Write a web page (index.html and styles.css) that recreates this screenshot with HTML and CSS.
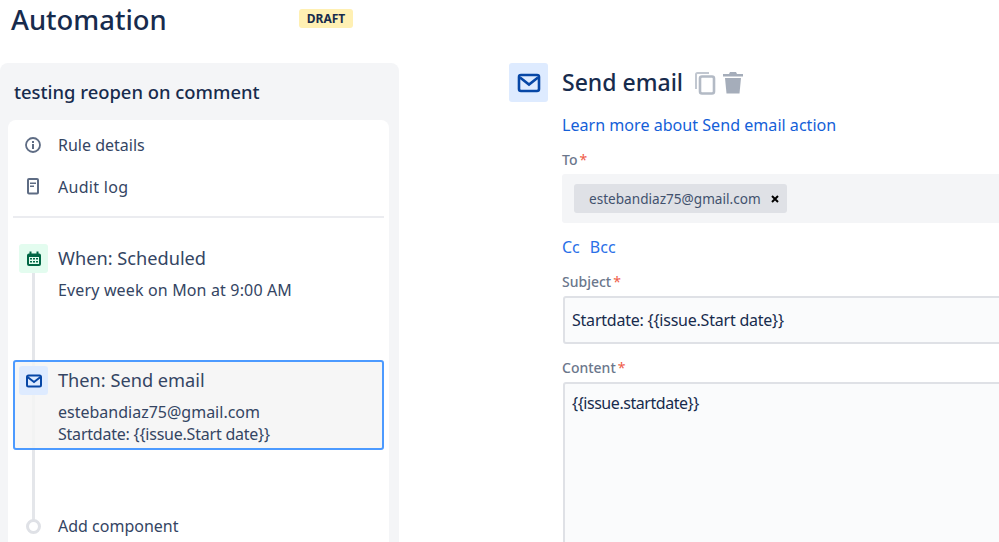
FILE: index.html
```html
<!DOCTYPE html>
<html lang="en">
<head>
    <meta charset="UTF-8">
    <meta name="viewport" content="width=device-width, initial-scale=1.0">
    <title>Automation</title>
    <link rel="stylesheet" href="styles.css">
</head>
<body>
    <div class="page">
        <div class="header">
            <h1 class="page-title">Automation</h1>
            <span class="badge">DRAFT</span>
        </div>
        <div class="main">
            <div class="panel">
                <div class="rule-name">testing reopen on comment</div>
                <div class="card">
                    <div class="menu-item">
                        <svg class="menu-icon" width="18" height="18" viewBox="0 0 18 18">
                            <circle cx="9" cy="9" r="7" fill="none" stroke="#5e6c84" stroke-width="1.800"/>
                            <rect x="8" y="8" width="2" height="5" fill="#5e6c84"/>
                            <rect x="8" y="5" width="2" height="2" fill="#5e6c84"/>
                        </svg>
                        <span>Rule details</span>
                    </div>
                    <div class="menu-item">
                        <svg class="menu-icon" width="18" height="18" viewBox="0 0 18 18">
                            <rect x="4" y="1" width="10" height="14.500" rx="1" fill="none" stroke="#5e6c84" stroke-width="2"/>
                            <rect x="6" y="4.500" width="6" height="1.500" fill="#5e6c84"/>
                            <rect x="6" y="7.500" width="4" height="1.500" fill="#5e6c84"/>
                        </svg>
                        <span class="wide">Audit log</span>
                    </div>
                    <div class="divider"></div>
                    <div class="timeline">
                        <div class="timeline-line"></div>
                        <div class="step step-when">
                            <div class="step-icon green">
                                <svg width="16" height="16" viewBox="0 0 16 16">
                                    <rect x="1" y="2.500" width="14" height="12.500" rx="2" fill="#006644"/>
                                    <rect x="3.500" y="0.500" width="2" height="3.500" fill="#006644"/>
                                    <rect x="10.500" y="0.500" width="2" height="3.500" fill="#006644"/>
                                    <rect x="3" y="6" width="10" height="7" fill="#e3fcef"/>
                                    <path d="M4 7h2v1.500H4zM7 7h2v1.500H7zM10 7h2v1.500h-2zM4 10h2v1.500H4zM7 10h2v1.500H7zM10 10h2v1.500h-2z" fill="#006644"/>
                                </svg>
                            </div>
                            <div class="step-body">
                                <div class="step-title">When: Scheduled</div>
                                <div class="step-desc when-desc">Every week on Mon at 9:00 AM</div>
                            </div>
                        </div>
                        <div class="step step-then">
                            <div class="step-icon blue">
                                <svg width="16" height="14" viewBox="0 0 16 14">
                                    <rect x="1" y="1.500" width="14" height="11" rx="1.500" fill="none" stroke="#0747a6" stroke-width="2"/>
                                    <path d="M1.500 3l6.500 5 6.500-5" fill="none" stroke="#0747a6" stroke-width="2"/>
                                </svg>
                            </div>
                            <div class="step-body">
                                <div class="step-title">Then: Send email</div>
                                <div class="step-desc then-desc">estebandiaz75@gmail.com<br><span class="tight">Startdate: {{issue.Start date}}</span></div>
                            </div>
                        </div>
                        <div class="step step-add">
                            <div class="add-dot"></div>
                            <span>Add component</span>
                        </div>
                    </div>
                </div>
            </div>
            <div class="form">
                <div class="form-head">
                    <div class="head-icon">
                        <svg width="24" height="20" viewBox="0 0 24 20">
                            <rect x="2" y="2" width="20" height="16" rx="2" fill="none" stroke="#0747a6" stroke-width="2.600"/>
                            <path d="M3 4.500l9 7 9-7" fill="none" stroke="#0747a6" stroke-width="2.600"/>
                        </svg>
                    </div>
                    <h2 class="form-title">Send email</h2>
                    <svg class="head-action" width="22" height="24" viewBox="0 0 22 24">
                        <path d="M2 18V3.500C2 2.500 2.500 2 3.500 2H15" fill="none" stroke="#c1c7d0" stroke-width="2"/>
                        <rect x="6" y="5.500" width="14" height="17" rx="2" fill="none" stroke="#b3bac5" stroke-width="2.600"/>
                    </svg>
                    <svg class="head-action" width="22" height="24" viewBox="0 0 22 24">
                        <path d="M8 1h6l1 2h6v2.500H1V3h6z" fill="#a5adba"/>
                        <path d="M3 7h16l-1.500 15.500h-13z" fill="#a5adba"/>
                    </svg>
                </div>
                <div class="form-body">
                    <a class="learn-link" href="#">Learn more about Send email action</a>
                    <label class="field-label to-label">To<span class="req">*</span></label>
                    <div class="to-box">
                        <div class="chip">
                            <span>estebandiaz75@gmail.com</span>
                            <svg width="8" height="8" viewBox="0 0 8 8">
                                <path d="M1 1l6 6M7 1l-6 6" stroke="#000" stroke-width="2"/>
                            </svg>
                        </div>
                    </div>
                    <div class="cc-row">
                        <a href="#">Cc</a>
                        <a href="#">Bcc</a>
                    </div>
                    <label class="field-label subject-label">Subject<span class="req">*</span></label>
                    <div class="text-input"><span class="tight">Startdate: {{issue.Start date}}</span></div>
                    <label class="field-label content-label">Content<span class="req">*</span></label>
                    <div class="text-area"><span class="tighter">{{issue.startdate}}</span></div>
                </div>
            </div>
        </div>
    </div>
</body>
</html>
```

FILE: styles.css
```css
* {
    margin: 0px;
    padding: 0px;
    box-sizing: border-box;
}
html, body {
    width: 999px;
    height: 542px;
    overflow: hidden;
}
body {
    background-color: white;
    font-family: "Noto Sans", "Open Sans", sans-serif;
    color: #172b4d;
}
.page {
    height: 542px;
    overflow: hidden;
}
.header {
    display: flex;
    align-items: flex-start;
    height: 63px;
    padding-left: 11px;
}
.page-title {
    font-size: 27.400px;
    font-weight: 500;
    line-height: 40px;
    width: 288px;
    color: #172b4d;
}
.badge {
    margin-top: 9px;
    width: 54px;
    height: 19px;
    border-radius: 3px;
    background-color: #fff0b3;
    font-size: 12px;
    font-weight: 700;
    line-height: 19px;
    text-align: center;
}
.main {
    display: flex;
    align-items: flex-start;
}
.panel {
    width: 399px;
    height: 479px;
    flex-shrink: 0;
    background-color: #f4f5f7;
    border-radius: 8px 8px 0 0;
    padding: 0 10px 0 8px;
}
.rule-name {
    height: 57px;
    padding: 16px 0 0 6px;
    font-size: 18.400px;
    font-weight: 500;
    line-height: 25px;
}
.card {
    background-color: white;
    border-radius: 8px 8px 0 0;
    height: 422px;
    padding: 4px 5px 0 5px;
}
.menu-item {
    display: flex;
    align-items: center;
    height: 42px;
    font-size: 16px;
    color: #344563;
}
.menu-icon {
    margin: 0 16px 0 11px;
    flex-shrink: 0;
}
.wide {
    letter-spacing: 0.3px;
}
.divider {
    height: 2px;
    background-color: #ebecf0;
    margin-top: 8px;
}
.timeline {
    position: relative;
    padding-top: 26px;
}
.timeline-line {
    position: absolute;
    left: 19px;
    top: 40px;
    width: 3px;
    height: 270px;
    background-color: #e4e6ea;
}
.step {
    display: flex;
    position: relative;
}
.step-icon {
    width: 29px;
    height: 29px;
    border-radius: 3px;
    display: flex;
    align-items: center;
    justify-content: center;
    flex-shrink: 0;
    margin-right: 10px;
}
.green {
    background-color: #e3fcef;
}
.blue {
    background-color: #deebff;
}
.step-when {
    height: 116px;
    padding-left: 6px;
}
.step-then {
    height: 90px;
    padding: 4px 0 0 4px;
    border: 2px solid #4c9aff;
    border-radius: 3px;
    background-color: rgba(244, 244, 244, 0.85);
}
.step-title {
    font-size: 18.200px;
    line-height: 28px;
    color: #344563;
}
.when-desc {
    margin-top: 7px;
    letter-spacing: 0.15px;
}
.then-desc {
    margin-top: 7px;
}
.step-desc {
    font-size: 16px;
    line-height: 22px;
    color: #344563;
}
.tight {
    letter-spacing: -0.22px;
}
.tighter {
    letter-spacing: -0.45px;
}
.step-add {
    align-items: center;
    margin-top: 65px;
    padding-left: 13px;
    font-size: 16px;
    color: #344563;
}
.add-dot {
    width: 15px;
    height: 15px;
    border-radius: 50%;
    border: 3px solid #dfe1e6;
    background-color: white;
    margin-right: 17px;
}
.form {
    margin-left: 110px;
    width: 560px;
    flex-shrink: 0;
}
.form-head {
    display: flex;
    align-items: center;
    height: 39px;
}
.head-icon {
    width: 39px;
    height: 39px;
    border-radius: 3px;
    background-color: #deebff;
    display: flex;
    align-items: center;
    justify-content: center;
    margin-right: 14px;
}
.form-title {
    font-size: 23px;
    font-weight: 500;
    line-height: 39px;
    margin-right: 11px;
}
.head-action {
    margin-right: 6px;
}
.form-body {
    padding-left: 53px;
    display: flex;
    flex-direction: column;
    align-items: flex-start;
}
.learn-link {
    margin-top: 11px;
    font-size: 16.100px;
    line-height: 24px;
    color: #1460d8;
    text-decoration: none;
}
.field-label {
    font-size: 14px;
    font-weight: 500;
    line-height: 20px;
    color: #6b778c;
}
.req {
    color: #ef5c48;
    margin-left: 2px;
    font-weight: 400;
}
.to-label {
    margin-top: 13px;
}
.to-box {
    width: 100%;
    height: 49px;
    margin-top: 4px;
    background-color: #f4f5f7;
    border-radius: 3px;
    padding: 10px 12px;
}
.chip {
    display: flex;
    align-items: center;
    justify-content: space-between;
    width: 213px;
    height: 29px;
    padding: 0 8px 0 15px;
    background-color: #dfe1e6;
    border-radius: 3px;
    font-size: 13.600px;
    color: #42526e;
}
.cc-row {
    display: flex;
    gap: 10px;
    margin-top: 12px;
    font-size: 16px;
    line-height: 24px;
}
.cc-row a {
    color: #2a6fe8;
    text-decoration: none;
}
.subject-label {
    margin-top: 13px;
}
.text-input {
    width: 100%;
    height: 48px;
    margin-top: 4px;
    margin-left: 1px;
    background-color: #fafbfc;
    border: 2px solid #dfe1e6;
    border-radius: 3px;
    padding-left: 7px;
    font-size: 16px;
    line-height: 44px;
}
.content-label {
    margin-top: 14px;
}
.text-area {
    width: 100%;
    height: 200px;
    margin-top: 4px;
    margin-left: 1px;
    background-color: #fafbfc;
    border: 2px solid #dfe1e6;
    border-radius: 3px;
    padding: 7px;
    font-size: 16px;
    line-height: 24px;
}
```
